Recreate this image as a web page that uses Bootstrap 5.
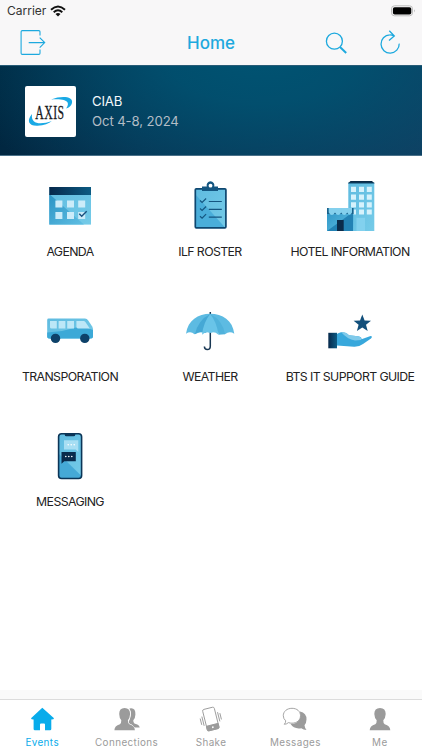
<!DOCTYPE html>
<html lang="en">
<head>
<meta charset="utf-8">
<meta name="viewport" content="width=device-width, initial-scale=1">
<title>Home</title>
<link href="https://cdn.jsdelivr.net/npm/bootstrap@5.3.0/dist/css/bootstrap.min.css" rel="stylesheet">
<style>
body{font-family:Inter,"Liberation Sans",sans-serif;color:#222;background:#fff;overflow:hidden}
svg{display:block}
.app-screen{height:750px}
.app-top{height:65px;background:#f8f7f8}
.status-row{height:21px;font-size:12px;line-height:21px;padding:0 6px 0 7px;color:#333}
.bar-row{height:44px;color:#1da9de}
.bar-side{width:140px}
.bar-title{font-size:17px;font-weight:500;line-height:44px}
.hero{height:91px;padding:0 25px;border-top:1px solid #285c77;border-bottom:1px solid #4a7189;background:radial-gradient(ellipse 75% 175% at 62% -10%,#005372 0%,rgba(0,83,114,.85) 30%,rgba(0,75,105,0) 100%),linear-gradient(100deg,#00263f 0%,#08304f 35%,#123c5f 100%)}
.logo-box{width:51px;height:51px;border-radius:2px;margin-top:1px}
.hero-text{margin-left:16px;font-size:13.2px;line-height:20px}
.hero-name{color:#f4f8fa;letter-spacing:-.15px}
.hero-date{color:#b3bdc6;letter-spacing:-.12px}
.tile{width:140px;height:125px;padding-top:18px}
.tile-label{font-size:12.3px;line-height:18px;margin-top:5px;letter-spacing:-.61px;white-space:nowrap}
.strip{height:9px;background:#fafafa}
.tabs{height:51px;border-top:1px solid #dcdcdc;color:#9b9b9b}
.tab-text{font-size:9.9px;line-height:12px;letter-spacing:.4px;margin-top:1px}
.tab-on{color:#08aceb}
</style>
<script src="https://cdn.jsdelivr.net/npm/bootstrap@5.3.0/dist/js/bootstrap.bundle.min.js"></script>
</head>
<body>
<div class="app-screen d-flex flex-column">
<header class="app-top">
  <div class="status-row d-flex align-items-center">
    <span>Carrier</span>
    <svg class="ms-1" width="16" height="12" viewBox="0 0 16 12" fill="none" stroke="#111" stroke-width="1.9"><path d="M1 4.7Q8-1.8 15 4.7M3.7 7.2Q8 3.2 12.3 7.2"/><path d="M5.5 8.9Q8 6.9 10.5 8.9L8 11.5Z" fill="#111" stroke="none"/></svg>
    <svg class="ms-auto" width="25" height="12" viewBox="0 0 25 12"><rect x=".5" y=".8" width="21" height="10" rx="3" fill="none" stroke="#bcbcbc"/><rect x="1.9" y="2.2" width="18.4" height="7.3" rx="1.8" fill="#000"/><path d="M23 4.2Q24.6 5.8 23 7.4Z" fill="#aaa"/></svg>
  </div>
  <div class="bar-row d-flex">
    <div class="bar-side"><svg width="140" height="44" viewBox="0 21 140 44" fill="none" stroke="currentColor" stroke-width="1.1"><path d="M40 35.5V31.8Q40 30.6 38.8 30.6H22.3Q21.1 30.6 21.1 31.8V53.2Q21.1 54.4 22.3 54.4H38.8Q40 54.4 40 53.2V49.6M28.7 42.6H44.6M39.7 37.6L44.7 42.6L39.7 47.6"/></svg></div>
    <div class="bar-title flex-fill text-center">Home</div>
    <div class="bar-side"><svg width="140" height="44" viewBox="282 21 140 44" fill="none" stroke="currentColor" stroke-width="1.3"><circle cx="334.4" cy="41.2" r="8"/><path d="M340 47L346.2 53" stroke-width="2"/><path d="M394 36Q391.5 34.8 389.8 34.9A9.1 9.1 0 1 0 399.2 43.6M389.3 30.8L394.3 36L389 40.5"/></svg></div>
  </div>
</header>
<section class="hero d-flex align-items-center">
  <div class="logo-box bg-white"><svg width="51" height="51" viewBox="0 0 51 51"><path d="M26 13.5C37 9.3 48.5 10.5 47 17C46.3 20.2 44 21.6 41.2 22.4C45 17.2 43.8 12.1 26 13.5Z" fill="#19a9e5"/><path d="M7 28C1 35 4.2 40.2 12.5 39.8C19 39.3 24 37.500 26.8 35C17 38.400 5.500 39.400 7 28Z" fill="#19a9e5"/><text transform="translate(10.300 32.600) scale(.6 1)" font-family="Liberation Serif,serif" font-size="19.500" letter-spacing=".8" fill="#17191c" stroke="#17191c" stroke-width=".3">AXIS</text></svg></div>
  <div class="hero-text"><div class="hero-name">CIAB</div><div class="hero-date">Oct 4-8, 2024</div></div>
</section>
<main class="flex-grow-1 d-flex flex-wrap align-content-start">
  <div class="tile text-center">
    <svg width="140" height="64" viewBox="0 174 140 64"><defs><linearGradient id="sky" x1="0" y1="0" x2="1" y2="1"><stop offset="0" stop-color="#5fbbe0"/><stop offset="1" stop-color="#75cbe8"/></linearGradient><linearGradient id="navy" x1="0" y1="0" x2="1" y2="0"><stop offset="0" stop-color="#06284b"/><stop offset="1" stop-color="#0c5b83"/></linearGradient><linearGradient id="deep" x1="0" y1="0" x2="1" y2="1"><stop offset="0" stop-color="#2b93c4"/><stop offset="1" stop-color="#60bfe3"/></linearGradient></defs>
    <rect x="49.3" y="187" width="41.7" height="37.6" fill="url(#sky)"/><path d="M49.3 194V224.6H84Z" fill="url(#deep)"/><rect x="49.3" y="187" width="41.7" height="8" fill="url(#navy)"/>
    <g fill="#ccecf9"><path d="M55.4 200.6h7v7h-7zM67 200.6h7v7h-7zM78.2 200.6h7v7h-7zM55.4 212h7v7h-7zM67 212h7v7h-7zM78.2 212h7v7h-7z"/></g><path d="M79.3 213.8L81.7 216.2L86.7 211.2" fill="none" stroke="#174f7c" stroke-width="1.4"/></svg>
    <div class="tile-label">AGENDA</div>
  </div>
  <div class="tile text-center">
    <svg width="140" height="64" viewBox="140 174 140 64"><rect x="195.3" y="188.8" width="30.6" height="39" rx="1" fill="url(#sky)"/><path d="M196 195L225 227.5H196Z" fill="#4aaeda"/><rect x="195.3" y="188.8" width="30.6" height="39" rx="1" fill="none" stroke="#0e4770" stroke-width="1.7"/><path d="M202 186.5H206.8A3.9 3.9 0 1 1 214.2 186.5H218V191H202Z" fill="#145681"/><circle cx="210.5" cy="185.7" r="1.9" fill="#fff"/><path d="M200 200.5l2.1 2 4-4M200 208.5l2.1 2 4-4M200 216.2l2.1 2 4-4M208.8 201.5h13M208.8 209.3h13M208.8 217.1h13" fill="none" stroke="#145681" stroke-width="1.2"/></svg>
    <div class="tile-label">ILF ROSTER</div>
  </div>
  <div class="tile text-center">
    <svg width="140" height="64" viewBox="280 174 140 64"><path d="M348.3 183.3L350.5 181H372L374.3 183.3Z" fill="#0a2a45"/><path d="M348.3 183H374.3V231H348.3Z" fill="url(#sky)"/><path d="M348.3 183H374.3" stroke="#0d4266" stroke-width="1"/><path d="M356.5 217.8h8.5V231h-8.5z" fill="#82d1ee"/>
    <g fill="#d6f2fc"><path d="M351 186.7h5v5.2h-5zM359 186.7h5v5.2h-5zM366.8 186.7h5v5.2h-5zM351 194.6h5v5.2h-5zM359 194.6h5v5.2h-5zM366.8 194.6h5v5.2h-5zM351 202.2h5v5.2h-5zM359 202.2h5v5.2h-5zM366.8 202.2h5v5.2h-5zM351 209.6h5v5h-5zM359 209.6h5v5h-5zM366.8 209.6h5v5h-5z"/></g>
    <path d="M327 208H353.5V231H327Z" fill="url(#deep)"/><path d="M327 231L353 212V231Z" fill="#2382b4"/><path d="M327 208H353.5V214H327Z" fill="#19618b"/><path d="M328.7 208h6.3v4.5q-3.1 5-6.3 0zM335 208h6.2v4.5q-3.1 5-6.2 0zM341.2 208h6v4.5q-3 5-6 0zM347.2 208h4.8v4.5q-2.4 4.600-4.8 0z" fill="#84d0ed"/><rect x="337" y="220" width="6.7" height="11" fill="#0b2b4a"/></svg>
    <div class="tile-label">HOTEL INFORMATION</div>
  </div>
  <div class="tile text-center">
    <svg width="140" height="64" viewBox="0 299 140 64"><path d="M48.6 318.6H85Q87 318.6 88.2 320.4L92.2 326.5Q93 327.8 93 329.5V336.3Q93 338.5 91 338.5H49Q47.2 338.5 47.2 336.8V320Q47.2 318.6 48.6 318.6Z" fill="url(#sky)"/><path d="M47.2 332.5L62 331L82 326L93 330V336.5Q93 338.5 91 338.5H49Q47.2 338.5 47.2 336.8Z" fill="#3ca9d7"/><path d="M50 321h6.8v7.6H51.5Q50 328.6 50 327.2zM58.6 321h6.8v7.6h-6.8zM67.2 321h6.8v7.6h-6.8zM76.4 321h7.2q1 0 1.8 1.1l4.4 6.3H78Q76.4 328.4 76.4 327z" fill="#bce7f7"/><circle cx="55.5" cy="338.4" r="4.7" fill="#0d4169"/><circle cx="84.8" cy="338.4" r="4.7" fill="#0d4169"/></svg>
    <div class="tile-label">TRANSPORATION</div>
  </div>
  <div class="tile text-center">
    <svg width="140" height="64" viewBox="140 299 140 64"><path d="M210.3 312V346Q210.3 349.6 207.3 349.6Q204.5 349.6 204.4 346.5" fill="none" stroke="#183753" stroke-width="1.5"/><path d="M186 333.8C188 320 198 314 210.2 313.8C222.500 314 232.600 320 234.300 333.800Q229.500 330.600 225 334.300Q218 330.400 210.300 332.800Q202 330.400 194.500 334.300Q190.500 330.600 186 333.800Z" fill="#5dbbe2"/><path d="M210.2 314Q198 320 195 334.200Q198.500 331.400 202 332.200Q210 337 210.200 314Z" fill="#45a8d5"/><path d="M210.200 314Q203.500 322 202 334.800Q206 330.800 210.300 332.700Q214.500 330.800 218.500 334.800Q217 322 210.200 314Z" fill="#69c4e8"/><path d="M210.2 314Q222.500 320 225 334.200L218.500 334.800Q217 322 210.200 314Z" fill="#50b2db"/></svg>
    <div class="tile-label">WEATHER</div>
  </div>
  <div class="tile text-center">
    <svg width="140" height="64" viewBox="280 299 140 64"><path d="M337 334C341 331 346 332 349 335.200L358 336.300Q362 337 361.500 339.200L370.600 336Q373 336 371 338.500L363 344Q359 347 354 346.800L337 345.500Z" fill="#38a8dc"/><path d="M341.500 332.500Q346 331.500 349 335.200L358 336.300Q362 337 361 340L355 340.600Q347 339 341.500 332.500Z" fill="#80caea"/><path d="M328.300 332.800H337V348.300H328.300Z" fill="url(#navy)"/><path d="M362.300 314.400L364.600 320.400L371 320.700L366 324.700L367.700 330.900L362.300 327.400L356.900 330.900L358.600 324.700L353.600 320.700L360 320.400Z" fill="#124f7b"/></svg>
    <div class="tile-label">BTS IT SUPPORT GUIDE</div>
  </div>
  <div class="tile text-center">
    <svg width="140" height="64" viewBox="0 424 140 64"><rect x="58.600" y="433.700" width="23" height="44.800" rx="3" fill="url(#sky)"/><path d="M59 454L81.500 476Q81.500 478.500 79 478.500H61Q59 478.500 59 476Z" fill="#45a9d6"/><rect x="58.600" y="433.700" width="23" height="44.800" rx="3" fill="none" stroke="#0b3557" stroke-width="1.600"/><path d="M64.500 433.500H75.500Q75.500 436.200 73.500 436.200H66.500Q64.500 436.200 64.500 433.500Z" fill="#0b3557"/><path d="M64 440.200H78.300V452L75.600 449.500H64Z" fill="#a7def3"/><path d="M61.500 452H75.800V461.200H64.300L61.500 463.700Z" fill="#092b4c"/><g fill="#fff"><circle cx="68.200" cy="444.800" r=".8"/><circle cx="71.200" cy="444.800" r=".8"/><circle cx="74.200" cy="444.800" r=".8"/><circle cx="65.800" cy="456.500" r=".8"/><circle cx="68.800" cy="456.500" r=".8"/><circle cx="71.800" cy="456.500" r=".8"/></g></svg>
    <div class="tile-label">MESSAGING</div>
  </div>
</main>
<div class="strip"></div>
<nav class="tabs d-flex text-center">
  <div class="flex-fill w-100 tab-on"><svg class="mx-auto" width="40" height="35" viewBox="22 700 40 35" fill="currentColor"><path d="M42.300 707.800L54 718.300Q54 719.500 51.300 719.500V729Q51.300 730.300 50 730.300H45V724.500Q45 723.500 44 723.500H41Q40 723.500 40 724.500V730.300H35Q33.600 730.300 33.600 729V719.500Q31 719.500 31 718.300Z"/></svg><div class="tab-text">Events</div></div>
  <div class="flex-fill w-100"><svg class="mx-auto" width="40" height="35" viewBox="106.600 700 40 35" fill="currentColor"><path d="M129 708.600Q135.300 707.200 135 714.500Q135 718 132.900 720.300Q132.800 722.800 134 723.500Q139 724.500 139.300 727.500H133Q133 725 128.400 723.200Q127.800 721.500 129.400 719.500Q132 713 129 708.600Z"/><path d="M124.200 708Q129.700 708 129.700 714Q129.500 718 127.500 720.300Q127.400 723.500 129 724.200Q134.300 725.600 134.500 730.300H114Q114 725.600 119.500 724.200Q121 723.500 120.900 720.300Q118.900 718 118.800 714Q118.700 708 124.200 708Z" stroke="#fff" stroke-width=".9" paint-order="stroke"/></svg><div class="tab-text">Connections</div></div>
  <div class="flex-fill w-100"><svg class="mx-auto" width="40" height="35" viewBox="191 700 40 35" fill="none" stroke="currentColor" stroke-width=".9"><g transform="rotate(-14 210.800 719)"><rect x="204.800" y="708" width="12" height="22" rx="1.600"/><path d="M204.800 725H216.800V729Q216.800 730 215.500 730H206Q204.800 730 204.800 729Z" fill="currentColor"/><circle cx="210.800" cy="727.500" r=".9" fill="#fff" stroke="none"/><path d="M202.700 714.500V724M200.600 716V722.500M219 714V723.500M221 715.500V722"/></g></svg><div class="tab-text">Shake</div></div>
  <div class="flex-fill w-100"><svg class="mx-auto" width="40" height="35" viewBox="275 700 40 35"><path d="M300 711.500Q306.700 713 306.500 719.500Q306.400 723.300 304.500 725.300Q304.800 728 306.500 730Q303.500 730 301.300 728.200Q294 729.500 290.400 723.800Q301.500 724.500 300 711.500Z" fill="currentColor"/><path d="M292 708.300C297 708.300 300.500 711.400 300.500 715.700C300.500 720 297 723.200 292 723.200Q290 723.200 288.500 722.600Q286.500 724.300 284.300 724.300Q285.800 722.600 285.700 720.800Q283.300 718.800 283.300 715.700C283.300 711.400 287 708.300 292 708.300Z" fill="#fff" stroke="currentColor" stroke-width=".9"/></svg><div class="tab-text">Messages</div></div>
  <div class="flex-fill w-100"><svg class="mx-auto" width="40" height="35" viewBox="359.500 700 40 35" fill="currentColor"><path d="M379.500 708Q385.200 708 385.200 714Q385 718 382.800 720.300Q382.700 723.500 384.200 724.200Q389.700 725.600 389.800 730.300H369.200Q369.300 725.600 374.800 724.200Q376.300 723.500 376.200 720.300Q374 718 373.800 714Q373.800 708 379.500 708Z"/></svg><div class="tab-text">Me</div></div>
</nav>
</div>
</body>
</html>
